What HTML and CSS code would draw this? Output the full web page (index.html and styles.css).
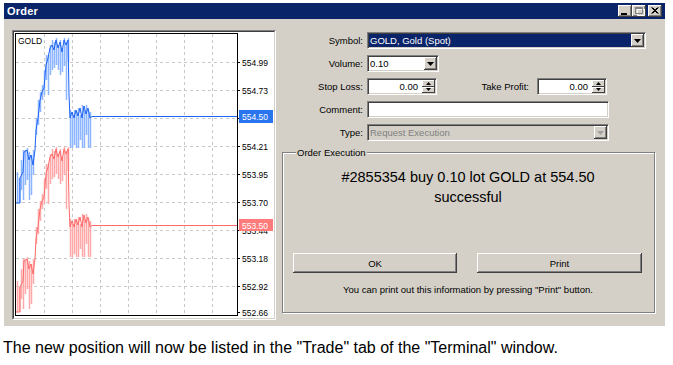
FILE: index.html
```html
<!DOCTYPE html>
<html lang="en">
<head>
<meta charset="UTF-8">
<title>Order</title>
<link rel="stylesheet" href="styles.css">
</head>
<body>

<div class="window">

  <!-- TITLE BAR -->
  <div class="titlebar">
    <span class="title">Order</span>
    <div class="caption-btns">
      <span class="cbtn"><svg width="14" height="12" viewBox="0 0 14 12"><rect x="3" y="8" width="6" height="2" fill="#000"/></svg></span>
      <span class="cbtn"><svg width="14" height="12" viewBox="0 0 14 12"><path d="M4.5 3.5h7v6h-7z M4 3.5h8" stroke="#fff" fill="none" transform="translate(1 1)"/><path d="M3.5 2.5h7v6h-7z M3 3.5h8" stroke="#808080" fill="none"/></svg></span>
      <span class="cbtn close"><svg width="14" height="12" viewBox="0 0 14 12"><path d="M3.5 2.5l6 6 M4.5 2.5l6 6 M9.5 2.5l-6 6 M10.5 2.5l-6 6" stroke="#000" fill="none"/></svg></span>
    </div>
  </div>

  <div class="content">

    <!-- CHART -->
    <div class="chart">
      <div class="chart-in">
        <svg width="260" height="286" viewBox="14 32 260 286">
          <defs>
            <g id="series">
              <path class="bars" d="M17.5 203V172 M19.5 203V178 M21.5 190V160 M23.5 200V150 M25.5 185V150 M27.5 180V148 M29.5 200V152 M31.5 195V155 M33.5 175V150
                M36.5 135V118 M38.5 125V100 M40.5 112V92 M42.5 100V85 M44.5 95V70 M46.5 80V55
                M48.5 95V55 M50.5 75V45 M52.5 70V40 M54.5 68V42 M56.5 65V38 M58.5 70V45 M60.5 75V40 M62.5 72V48 M64.5 66V38 M66.5 100V42 M68.5 62V38
                M70.5 148V110 M72.5 148V115 M74.5 145V110 M76.5 148V112 M78.5 148V108 M80.5 140V115 M82.5 148V105 M84.5 148V110 M86.5 135V105 M88.5 148V110 M90.5 148V112" fill="none" stroke-width="1.5"/>
              <polyline points="16,203 20,203 20,178 23,172 24,152 27,150 29,160 31,155 33,165 35,150 36,130 38,118 40,100 42,92 44,88 46,65 48,58 50,48 52,45 54,50 56,40 58,48 60,42 62,52 64,40 66,45 68,40 69,95 70,118 72,112 74,118 76,110 78,116 80,108 82,118 84,106 86,114 88,108 90,118 92,116.5 237,116.5" fill="none" stroke="currentColor"/>
            </g>
          </defs>

          <!-- grid -->
          <g class="grid">
            <path d="M16 62.5H237 M16 90.5H237 M16 118.5H237 M16 146.5H237 M16 174.5H237 M16 202.5H237 M16 230.5H237 M16 258.5H237 M16 286.5H237"/>
            <path d="M44.5 34V315 M72.5 34V315 M100.5 34V315 M128.5 34V315 M156.5 34V315 M184.5 34V315 M212.5 34V315"/>
          </g>

          <use href="#series" stroke="#8db6ff" color="#1d64f2"/>
          <use href="#series" y="109" stroke="#ffaaaa" color="#ff6a6a"/>

          <rect x="15.5" y="33.5" width="222" height="282" fill="none" stroke="#000"/>
          <path class="ticks" d="M237 62.5h3 M237 90.5h3 M237 118.5h3 M237 146.5h3 M237 174.5h3 M237 202.5h3 M237 230.5h3 M237 258.5h3 M237 286.5h3 M237 312.5h3"/>

          <g class="axis">
            <text x="18" y="44">GOLD</text>
            <text x="242" y="65.5">554.99</text>
            <text x="242" y="93.5">554.73</text>
            <text x="242" y="149.5">554.21</text>
            <text x="242" y="177.5">553.95</text>
            <text x="242" y="205.5">553.70</text>
            <text x="242" y="261.5">553.18</text>
            <text x="242" y="289.5">552.92</text>
            <text x="242" y="315.5">552.66</text>
          </g>

          <!-- price hidden under the ask tag: only its lower edge shows -->
          <clipPath id="below-tag"><rect x="239" y="231" width="34" height="6"/></clipPath>
          <text class="axis-hidden" x="242" y="233.5" clip-path="url(#below-tag)">553.44</text>

          <rect x="239" y="110" width="34" height="13" fill="#2a74f0"/>
          <text class="tag" x="242" y="120">554.50</text>
          <rect x="239" y="219" width="34" height="12" fill="#ff7b7b"/>
          <text class="tag" x="242" y="228.5">553.50</text>
        </svg>
      </div>
    </div>

    <!-- ORDER FORM -->
    <div class="panel">
      <div class="row">
        <label>Symbol:</label>
        <div class="field symbol">
          <span class="val">GOLD, Gold (Spot)</span>
          <span class="drop"><svg width="7" height="4" viewBox="0 0 7 4"><path d="M0 0h7l-3.5 4z" fill="#000"/></svg></span>
        </div>
      </div>
      <div class="row">
        <label>Volume:</label>
        <div class="field volume">
          <span class="val">0.10</span>
          <span class="drop"><svg width="7" height="4" viewBox="0 0 7 4"><path d="M0 0h7l-3.5 4z" fill="#000"/></svg></span>
        </div>
      </div>
      <div class="row">
        <label>Stop Loss:</label>
        <div class="field num">
          <span class="val">0.00</span>
          <span class="spin"><i><svg width="5" height="3" viewBox="0 0 5 3"><path d="M2.5 0L5 3H0z" fill="#000"/></svg></i><i><svg width="5" height="3" viewBox="0 0 5 3"><path d="M0 0h5L2.5 3z" fill="#000"/></svg></i></span>
        </div>
        <label class="tp">Take Profit:</label>
        <div class="field num tp-field">
          <span class="val">0.00</span>
          <span class="spin"><i><svg width="5" height="3" viewBox="0 0 5 3"><path d="M2.5 0L5 3H0z" fill="#000"/></svg></i><i><svg width="5" height="3" viewBox="0 0 5 3"><path d="M0 0h5L2.5 3z" fill="#000"/></svg></i></span>
        </div>
      </div>
      <div class="row">
        <label>Comment:</label>
        <div class="field long"></div>
      </div>
      <div class="row">
        <label>Type:</label>
        <div class="field long disabled">
          <span class="val">Request Execution</span>
          <span class="drop"><svg width="7" height="4" viewBox="0 0 7 4"><path d="M0 0h7l-3.5 4z" fill="#a0a0a0"/></svg></span>
        </div>
      </div>

      <fieldset class="group">
        <legend>Order Execution</legend>
        <div class="message">#2855354 buy 0.10 lot GOLD at 554.50<br>successful</div>
        <div class="buttons">
          <button class="btn ok">OK</button>
          <button class="btn print">Print</button>
        </div>
        <p class="hint">You can print out this information by pressing "Print" button.</p>
      </fieldset>
    </div>

  </div>
</div>

<p class="caption">The new position will now be listed in the "Trade" tab of the "Terminal" window.</p>

</body>
</html>
```

FILE: styles.css
```css
* { box-sizing: border-box; }
body { margin: 0; background: #fff; font-family: "Liberation Sans", Arial, sans-serif; }

/* WINDOW */
.window {
  margin: 3px 0 0 4px;
  width: 661px;
  height: 323px;
  background: #d4d0c8;
  display: flex;
  flex-direction: column;
}

.titlebar {
  height: 16px;
  background: #0a246a;
  display: flex;
  align-items: center;
  justify-content: space-between;
  padding: 0 3px;
}
.title { color: #fff; font-weight: bold; font-size: 11px; letter-spacing: 0.2px; }

.caption-btns { display: flex; }
.cbtn {
  width: 14px;
  height: 12px;
  display: block;
  background: #d4d0c8;
  box-shadow: inset -1px -1px #404040, inset 1px 1px #fff, inset -2px -2px #808080;
}
.cbtn svg { display: block; }
.cbtn.close { margin-left: 2px; }

.content { display: flex; padding: 11px 0 0 8px; }

/* CHART */
.chart {
  border: 1px solid;
  border-color: #808080 #fff #fff #808080;
}
.chart-in {
  border: 1px solid;
  border-color: #404040 #d4d0c8 #d4d0c8 #404040;
  background: #fff;
}
.chart svg { display: block; }
.grid path { stroke: #c8c8c8; stroke-dasharray: 3 3; fill: none; }
.ticks { stroke: #000; fill: none; }
.axis text, .axis-hidden { font-size: 8.5px; fill: #000; }
.tag { font-size: 8.5px; fill: #fff; }

/* FORM */
.panel { margin-left: 5px; width: 374px; padding-top: 2px; font-size: 9.5px; color: #000; }

.row { display: flex; align-items: center; gap: 4px; height: 17px; margin-bottom: 6px; }
.row label { width: 82px; text-align: right; }
.row label.tp { width: 88px; }

.field {
  height: 17px;
  display: flex;
  align-items: center;
  background: #fff;
  border: 1px solid;
  border-color: #808080 #fff #fff #808080;
  box-shadow: inset 1px 1px #404040, inset -1px -1px #d4d0c8;
  padding: 0 1px 0 2px;
}
.field .val { flex: 1; }
.symbol { width: 279px; background: #0a246a; color: #fff; }
.volume { width: 72px; }
.num { width: 70px; }
.num .val { text-align: right; padding-right: 4px; }
.tp-field { margin-left: 4px; }
.long { width: 242px; }
.disabled { background: #d4d0c8; color: #808080; }

.drop {
  width: 13px;
  height: 13px;
  display: flex;
  align-items: center;
  justify-content: center;
  background: #d4d0c8;
  box-shadow: inset -1px -1px #404040, inset 1px 1px #fff, inset -2px -2px #808080;
}
.spin { width: 13px; height: 13px; display: flex; flex-direction: column; }
.spin i {
  flex: 1;
  display: flex;
  align-items: center;
  justify-content: center;
  background: #d4d0c8;
  box-shadow: inset -1px -1px #404040, inset 1px 1px #fff;
}
.spin svg, .drop svg { display: block; }

/* ORDER EXECUTION GROUP */
.group {
  margin: 4px 0 0 1px;
  width: 373px;
  height: 166px;
  padding: 0 11px 0 10px;
  border: 1px solid #808080;
  box-shadow: inset 1px 1px #fff, 1px 1px #fff;
}
.group legend { font-size: 9.5px; padding: 0 1px; margin-left: 3px; background: #d4d0c8; line-height: 11px; }

.message { margin-top: 9px; text-align: center; font-size: 14.5px; line-height: 20px; }

.buttons { display: flex; gap: 20px; margin-top: 46px; }
.btn {
  height: 20px;
  font: inherit;
  color: #000;
  background: #d4d0c8;
  border: none;
  box-shadow: inset -1px -1px #404040, inset 1px 1px #fff, inset -2px -2px #808080;
}
.ok { width: 164px; }
.print { width: 165px; }

.hint { margin: 11px 0 0; text-align: center; line-height: 12px; }

/* CAPTION */
.caption { margin: 13px 0 0 3px; font-size: 16px; line-height: 18px; color: #000; }
```
